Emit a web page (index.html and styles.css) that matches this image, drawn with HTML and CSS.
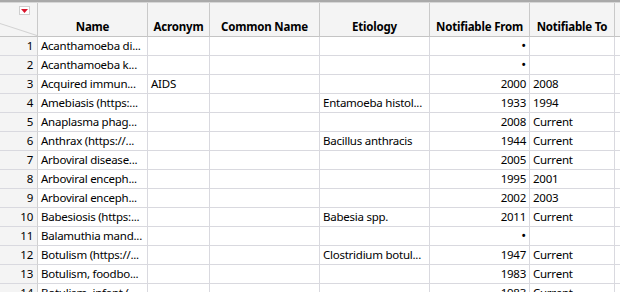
FILE: index.html
```html
<!DOCTYPE html>
<html>
<head>
<meta charset="utf-8">
<link rel="stylesheet" href="styles.css">
</head>
<body>
<div class="topband"></div>
<div class="grid">
  <div class="row head">
    <div class="cell num corner">
      <span class="diag"></span>
      <span class="menu-btn"><svg width="7" height="4" viewBox="0 0 7 4"><path d="M0 0H7L3.5 4Z" fill="#d9142b"/></svg></span>
    </div>
    <div class="cell name">Name</div>
    <div class="cell acr">Acronym</div>
    <div class="cell common">Common Name</div>
    <div class="cell etio">Etiology</div>
    <div class="cell from">Notifiable From</div>
    <div class="cell to">Notifiable To</div>
    <div class="cell rest"></div>
  </div>
  <div class="row"><div class="cell num">1</div><div class="cell name">Acanthamoeba di...</div><div class="cell acr"></div><div class="cell common"></div><div class="cell etio"></div><div class="cell from"><span class="dot">•</span></div><div class="cell to"></div><div class="cell rest"></div></div>
  <div class="row"><div class="cell num">2</div><div class="cell name">Acanthamoeba k...</div><div class="cell acr"></div><div class="cell common"></div><div class="cell etio"></div><div class="cell from"><span class="dot">•</span></div><div class="cell to"></div><div class="cell rest"></div></div>
  <div class="row"><div class="cell num">3</div><div class="cell name">Acquired immun...</div><div class="cell acr">AIDS</div><div class="cell common"></div><div class="cell etio"></div><div class="cell from">2000</div><div class="cell to">2008</div><div class="cell rest"></div></div>
  <div class="row"><div class="cell num">4</div><div class="cell name">Amebiasis (https:...</div><div class="cell acr"></div><div class="cell common"></div><div class="cell etio">Entamoeba histol...</div><div class="cell from">1933</div><div class="cell to">1994</div><div class="cell rest"></div></div>
  <div class="row"><div class="cell num">5</div><div class="cell name">Anaplasma phag...</div><div class="cell acr"></div><div class="cell common"></div><div class="cell etio"></div><div class="cell from">2008</div><div class="cell to">Current</div><div class="cell rest"></div></div>
  <div class="row"><div class="cell num">6</div><div class="cell name">Anthrax (https://...</div><div class="cell acr"></div><div class="cell common"></div><div class="cell etio">Bacillus anthracis</div><div class="cell from">1944</div><div class="cell to">Current</div><div class="cell rest"></div></div>
  <div class="row"><div class="cell num">7</div><div class="cell name">Arboviral disease...</div><div class="cell acr"></div><div class="cell common"></div><div class="cell etio"></div><div class="cell from">2005</div><div class="cell to">Current</div><div class="cell rest"></div></div>
  <div class="row"><div class="cell num">8</div><div class="cell name">Arboviral enceph...</div><div class="cell acr"></div><div class="cell common"></div><div class="cell etio"></div><div class="cell from">1995</div><div class="cell to">2001</div><div class="cell rest"></div></div>
  <div class="row"><div class="cell num">9</div><div class="cell name">Arboviral enceph...</div><div class="cell acr"></div><div class="cell common"></div><div class="cell etio"></div><div class="cell from">2002</div><div class="cell to">2003</div><div class="cell rest"></div></div>
  <div class="row"><div class="cell num">10</div><div class="cell name">Babesiosis (https:...</div><div class="cell acr"></div><div class="cell common"></div><div class="cell etio">Babesia spp.</div><div class="cell from">2011</div><div class="cell to">Current</div><div class="cell rest"></div></div>
  <div class="row"><div class="cell num">11</div><div class="cell name">Balamuthia mand...</div><div class="cell acr"></div><div class="cell common"></div><div class="cell etio"></div><div class="cell from"><span class="dot">•</span></div><div class="cell to"></div><div class="cell rest"></div></div>
  <div class="row"><div class="cell num">12</div><div class="cell name">Botulism (https://...</div><div class="cell acr"></div><div class="cell common"></div><div class="cell etio">Clostridium botul...</div><div class="cell from">1947</div><div class="cell to">Current</div><div class="cell rest"></div></div>
  <div class="row"><div class="cell num">13</div><div class="cell name">Botulism, foodbo...</div><div class="cell acr"></div><div class="cell common"></div><div class="cell etio"></div><div class="cell from">1983</div><div class="cell to">Current</div><div class="cell rest"></div></div>
  <div class="row"><div class="cell num">14</div><div class="cell name">Botulism, infant (...</div><div class="cell acr"></div><div class="cell common"></div><div class="cell etio"></div><div class="cell from">1983</div><div class="cell to">Current</div><div class="cell rest"></div></div>
</div>
</body>
</html>
```

FILE: styles.css
```css
html, body {
  margin: 0;
  padding: 0;
  background: #ffffff;
  overflow: hidden;
}
body {
  width: 620px;
  height: 292px;
  font-family: "Noto Sans", "Open Sans", sans-serif;
  font-size: 11.5px;
  letter-spacing: -0.25px;
  color: #000;
}
.topband {
  height: 3px;
  box-sizing: border-box;
  background: #a9a9a9;
  border-bottom: 1px solid #d6d6d6;
}
.grid {
  display: flex;
  flex-direction: column;
  width: 630px;
}
.row {
  display: flex;
  height: 19px;
  flex: none;
}
.cell {
  box-sizing: border-box;
  flex: none;
  height: 100%;
  padding: 0 3px;
  border-right: 1px solid #d9d9df;
  border-bottom: 1px solid #d9d9df;
  white-space: nowrap;
  overflow: hidden;
  line-height: 18px;
}
.num { width: 38px; background: #f4f4f4; text-align: right; padding-right: 4px; border-right-color: #d0d0d0; }
.name { width: 110px; }
.acr { width: 62px; }
.common { width: 110px; }
.etio { width: 110px; }
.from { width: 100px; text-align: right; }
.to { width: 85px; }
.rest { width: 20px; border-right: none; }
.dot { font-size: 13px; position: relative; top: -1px; }

.head { height: 34px; }
.head .cell {
  background: #f4f4f4;
  border-right-color: #c9c9c9;
  border-bottom-color: #c4c4c4;
  display: flex;
  align-items: flex-end;
  justify-content: center;
  padding: 0 2px 2px;
  font-weight: bold;
  letter-spacing: -0.2px;
  line-height: 15px;
}
.head .corner {
  position: relative;
  padding: 0;
}
.diag {
  position: absolute;
  left: 0;
  top: 20px;
  width: 40px;
  height: 1px;
  background: #d2d2d2;
  transform-origin: 0 0;
  transform: rotate(18deg);
}
.menu-btn {
  position: absolute;
  left: 19px;
  top: 3px;
  width: 11px;
  height: 9px;
  box-sizing: border-box;
  border: 1px solid #cfcfcf;
  background: #ffffff;
  display: flex;
  align-items: center;
  justify-content: center;
}
.menu-btn svg { display: block; }
```
